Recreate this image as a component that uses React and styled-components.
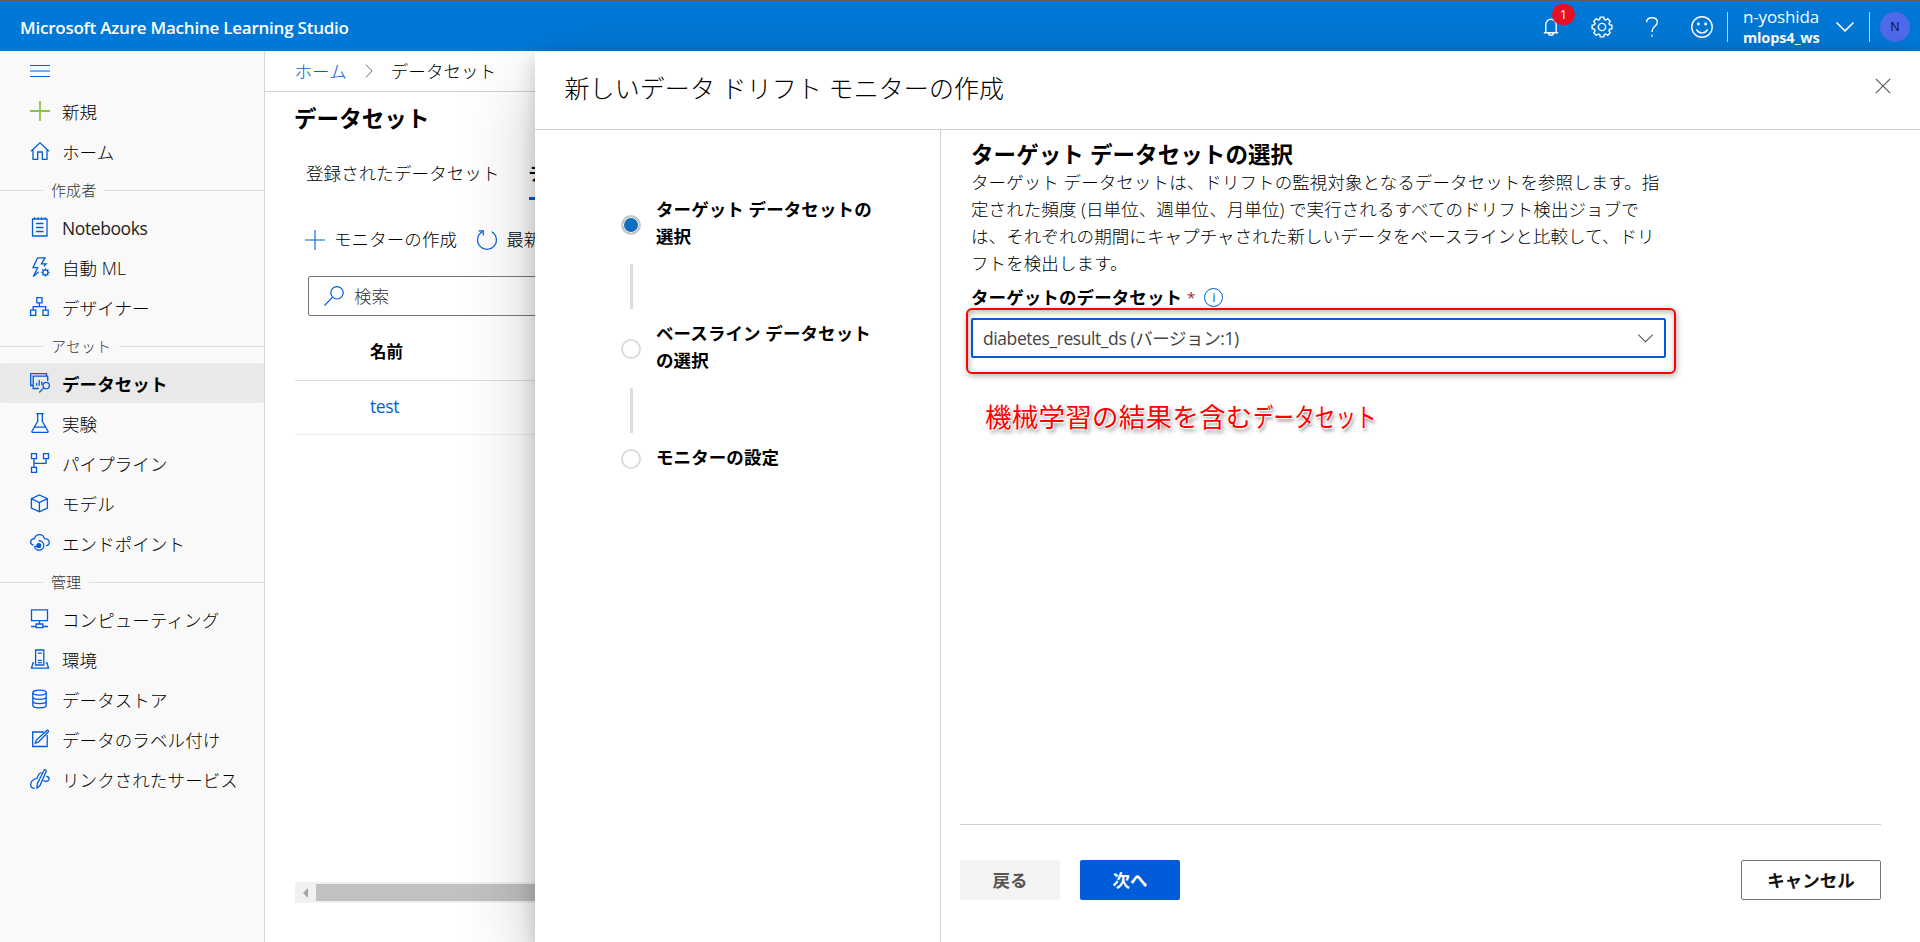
import React from 'react';
import styled, { createGlobalStyle, css } from 'styled-components';

const BLUE = '#015cda';

const NAV = [
  { icon: 'plus', label: '新規' },
  { icon: 'home', label: 'ホーム' },
  { group: '作成者' },
  { icon: 'notebook', label: 'Notebooks', latin: true },
  { icon: 'automl', label: '自動 ML' },
  { icon: 'designer', label: 'デザイナー' },
  { group: 'アセット' },
  { icon: 'dataset', label: 'データセット', active: true },
  { icon: 'flask', label: '実験' },
  { icon: 'pipeline', label: 'パイプライン' },
  { icon: 'cube', label: 'モデル' },
  { icon: 'endpoint', label: 'エンドポイント' },
  { group: '管理' },
  { icon: 'compute', label: 'コンピューティング' },
  { icon: 'environment', label: '環境' },
  { icon: 'datastore', label: 'データストア' },
  { icon: 'labeling', label: 'データのラベル付け' },
  { icon: 'linked', label: 'リンクされたサービス' },
];

const GEAR =
  'M8.4 1h3.2l.5 2.2 1.2.5 1.9-1.2 2.3 2.3-1.2 1.9.5 1.2 2.2.5v3.2l-2.2.5-.5 1.2 1.2 1.9-2.3 2.3-1.9-1.2-1.2.5-.5 2.2H8.4l-.5-2.2-1.2-.5-1.9 1.2-2.3-2.3 1.2-1.9-.5-1.2L1 11.6V8.4l2.2-.5.5-1.2-1.2-1.9 2.3-2.3 1.9 1.2 1.2-.5z';

// every drawing sits on a 20 x 20 grid
const icons = {
  menu: <path d="M0 4.5h20M0 10h20M0 15.5h20" />,
  plus: <path d="M10 0v20M0 10h20" />,
  home: <path d="M1 10.3 10 1.8l9 8.5M3 8.8V18.3h4.7V11h4.6v7.3H17V8.8" />,
  notebook: (
    <path d="M2.500 2h14.500v17H2.500zM6 6.500h7.500M6 10.500h7.500M6 14.500h7.500M4.600.2v1.800M8.200.2v1.800M11.600.2v1.800M15 .2v1.800" />
  ),
  automl: (
    <>
      <path d="M7.600.8h7.400l-3.600 6h4.800l-2.400 2.600M7.600.8 3 10.700h4.600L3.300 19.600l5.400-4.800" />
      <circle cx="15.400" cy="15.400" r="2.500" />
      <path d="M15.400 11.200v1.500M15.400 18.100v1.500M11.200 15.400h1.500M18.100 15.400h1.500M12.400 12.400l1 1M17.400 17.400l1 1M12.400 18.400l1-1M17.400 13.400l1-1" />
    </>
  ),
  designer: (
    <path d="M6.800.7h5.200v5.200H6.800zM.6 13.200h5.200v5.200H.6zM13 13.200h5.200v5.200H13zM9.400 5.900v3.800M3.200 13.200V9.700h12.400v3.500" />
  ),
  dataset: (
    <>
      <path d="M3.200 12.500H.7V.7h15.800v2.500" />
      <path d="M8.800 15.500H3.200V3.200h14.500V8M6.600 12.800V10M9.200 12.800V7M11.800 12V8.500" />
      <circle cx="16.200" cy="12.600" r="3.200" />
      <path d="m13.900 14.900-4.700 4.600" />
    </>
  ),
  flask: (
    <path d="M6.200.7h7.600M7.700.7v7.600L2 18.200q-.4 1.100.8 1.100h14.400q1.200 0 .8-1.100L12.300 8.300V.7M4.600 14.200h10.800" />
  ),
  pipeline: (
    <path d="M1.500.7h5v5h-5zM13.500.7h5v5h-5zM1.500 14.300h5v5h-5zM4 5.700v8.600M16 5.700v4.600H4" />
  ),
  cube: (
    <path d="m9.400 2 8 3.700v9.300l-8 3.800-8-3.800V5.700zM1.400 5.700l8 3.900 8-3.900M9.400 9.600v9.200" />
  ),
  endpoint: (
    <>
      <path d="M3.600 12.200C1.600 11.800.7 10.500.7 9c0-2.200 1.900-3.500 3.700-3.200C5 3.200 7 1.600 9.400 1.600c2.600 0 4.500 1.500 5 4 2.600-.1 4.800 1.300 4.800 3.800 0 1.900-1.400 3.100-3.300 3.200" />
      <path d="M4.500 13.400a4.700 4.700 0 1 0 4-5.600M4.500 13.400h4" />
      <circle cx="8.800" cy="12.500" r="1.900" fill="currentColor" />
    </>
  ),
  compute: (
    <path d="M1.500.8h16v10.800h-16zM9.500 11.600v3.200M1 17.500h5M13 17.500h5M6.200 15h6.600v3.600H6.200z" />
  ),
  environment: (
    <path d="M5.600 16V1h8.200v15zM7.800 4.200h4M7.800 11.300h4M7.800 13.600h4M4 14H3L1.500 19.200h17L17 14h-1.300" />
  ),
  datastore: (
    <>
      <ellipse cx="9.500" cy="3.600" rx="6.700" ry="2.500" />
      <path d="M2.800 3.600v12.600c0 1.500 3 2.600 6.700 2.600s6.700-1.100 6.700-2.600V3.600M2.800 7.800c0 1.500 3 2.600 6.700 2.600s6.700-1.100 6.700-2.600M2.800 12c0 1.500 3 2.600 6.700 2.600s6.700-1.100 6.700-2.600" />
    </>
  ),
  labeling: (
    <path d="M13.500 3H2.700v14.500h14.500V6M17.200 1.200c1.200 0 1.700 1 1 1.800L8.500 13 5.300 14.200l1-3.200z" />
  ),
  linked: (
    <>
      <path d="M14.300.8c1.300-.4 2.300.6 1.800 1.800L10 16.500l-3 2.600.2-4.200z" />
      <path d="M11.500 4c-1.500-.4-2.500.8-3 2L6.600 10M6.200 9.600C3 9.800.7 12.800.7 15.400c0 2.300 1.600 3.900 4 3.900M13.400 11.500c2.300 1.800 5.800.6 5.800-1.500 0-1.500-1.200-2.400-2.800-2.500" />
    </>
  ),
  bell: (
    <path d="M2.800 16.800h14.400M4.800 16.800V8.500a5.200 5.200 0 0 1 10.400 0v8.300M7.500 17c0 3 5 3 5 0" />
  ),
  gear: (
    <>
      <path d={GEAR} />
      <circle cx="10" cy="10" r="3.300" />
    </>
  ),
  help: (
    <>
      <path d="M4.600 5.200C4.800 2.400 7 .8 10 .8c3.200 0 5.300 1.700 5.300 4.300 0 4.300-5.200 4.600-5.200 8.600v1.200" />
      <path d="M10.100 17.800v1.900" />
    </>
  ),
  smile: (
    <>
      <circle cx="10" cy="10" r="9.300" />
      <path d="M5 12.200c2 4.200 8 4.200 10 0" />
      <circle cx="6.700" cy="7.200" r=".7" fill="currentColor" />
      <circle cx="13.300" cy="7.200" r=".7" fill="currentColor" />
    </>
  ),
  down: <path d="m1.500 5.500 8.500 8.300 8.500-8.300" />,
  right: <path d="m6 2 8 8-8 8" />,
  close: <path d="m1 1 18 18M19 1 1 19" />,
  refresh: <path d="M5.300 1.800a9.400 9.400 0 1 0 9.400 0M1.500.8h4.800v4.600" />,
  search: (
    <>
      <circle cx="13" cy="6.800" r="6.200" />
      <path d="M8.600 11.200.5 19.500" />
    </>
  ),
};

const Icon = ({ name, size = 20, stroke = 1.2, color }) => (
  <Svg viewBox="0 0 20 20" width={size} height={size} strokeWidth={stroke} $color={color}>
    {icons[name]}
  </Svg>
);

const Header = () => (
  <TopBar>
    <Brand>Microsoft Azure Machine Learning Studio</Brand>
    <Tools>
      <Tool>
        <Icon name="bell" stroke={1.4} />
        <Badge>1</Badge>
      </Tool>
      <Tool>
        <Icon name="gear" size={22} stroke={1.3} />
      </Tool>
      <Tool>
        <Icon name="help" stroke={1.4} />
      </Tool>
      <Tool>
        <Icon name="smile" size={22} stroke={1.3} />
      </Tool>
    </Tools>
    <Account>
      <Identity>
        <UserName>n-yoshida</UserName>
        <Workspace>mlops4_ws</Workspace>
      </Identity>
      <Icon name="down" stroke={1.7} />
    </Account>
    <Avatar>N</Avatar>
  </TopBar>
);

const Sidebar = () => (
  <Side>
    <NavItem>
      <Icon name="menu" stroke={1.1} />
    </NavItem>
    {NAV.map(item =>
      item.group ? (
        <NavGroup key={item.group}>
          <span>{item.group}</span>
        </NavGroup>
      ) : (
        <NavItem key={item.label} $active={item.active}>
          <Icon
            name={item.icon}
            stroke={item.icon === 'plus' ? 1.8 : 1.3}
            color={item.icon === 'plus' ? '#8cc63f' : undefined}
          />
          <NavLabel $latin={item.latin}>{item.label}</NavLabel>
        </NavItem>
      )
    )}
  </Side>
);

const Datasets = () => (
  <Main>
    <Breadcrumb>
      <a>ホーム</a>
      <Icon name="right" size={16} color="#666" />
      <span>データセット</span>
    </Breadcrumb>
    <PageTitle>データセット</PageTitle>
    <Tabs>
      <Tab>登録されたデータセット</Tab>
      <Tab $active>データセット モニター</Tab>
    </Tabs>
    <Toolbar>
      <Command>
        <Icon name="plus" stroke={1.1} />
        モニターの作成
      </Command>
      <Command>
        <Icon name="refresh" />
        最新の情報に更新
      </Command>
    </Toolbar>
    <SearchBox>
      <Icon name="search" />
      検索
    </SearchBox>
    <TableHead>名前</TableHead>
    <TableRow>test</TableRow>
    <ScrollTrack>
      <ScrollArrow />
      <ScrollThumb />
    </ScrollTrack>
  </Main>
);

const Wizard = () => (
  <Drawer>
    <DrawerHead>
      <DrawerTitle>新しいデータ ドリフト モニターの作成</DrawerTitle>
      <Icon name="close" size={16} stroke={1.4} color="#555" />
    </DrawerHead>
    <DrawerBody>
      <Steps>
        <Step>
          <Dot $active />
          <StepText>
            ターゲット データセットの
            <br />
            選択
          </StepText>
        </Step>
        <StepLine />
        <Step>
          <Dot />
          <StepText>
            ベースライン データセット
            <br />
            の選択
          </StepText>
        </Step>
        <StepLine />
        <Step>
          <Dot />
          <StepText>モニターの設定</StepText>
        </Step>
      </Steps>
      <Content>
        <Form>
          <FormTitle>ターゲット データセットの選択</FormTitle>
          <Description>
            ターゲット データセットは、ドリフトの監視対象となるデータセットを参照します。指
            <br />
            定された頻度 (日単位、週単位、月単位) で実行されるすべてのドリフト検出ジョブで
            <br />
            は、それぞれの期間にキャプチャされた新しいデータをベースラインと比較して、ドリ
            <br />
            フトを検出します。
          </Description>
          <Label>
            ターゲットのデータセット
            <Required>*</Required>
            <Info>i</Info>
          </Label>
          <Select>
            <span>diabetes_result_ds (バージョン:1)</span>
            <Icon name="down" size={17} color="#555" />
            <Highlight />
          </Select>
          <Note>
            機械学習の結果を含む<Narrow>データセット</Narrow>
          </Note>
        </Form>
        <Footer>
          <Button $kind="disabled">戻る</Button>
          <Button $kind="primary">次へ</Button>
          <Button $kind="outline">キャンセル</Button>
        </Footer>
      </Content>
    </DrawerBody>
  </Drawer>
);

export default function App() {
  return (
    <Page>
      <GlobalStyle />
      <Header />
      <Workarea>
        <Sidebar />
        <Datasets />
      </Workarea>
      <Wizard />
    </Page>
  );
}

const GlobalStyle = createGlobalStyle`
  * {
    box-sizing: border-box;
  }

  body {
    margin: 0;
    font-family: 'Open Sans', 'Noto Sans CJK JP', sans-serif;
    font-size: 17.5px;
    font-weight: 300;
    line-height: 27px;
    letter-spacing: 0.09px;
    color: #000;
    background: #fff;
  }
`;

const Svg = styled.svg`
  flex: none;
  fill: none;
  stroke: currentColor;
  color: ${props => props.$color || 'inherit'};
  overflow: visible;
`;

const Page = styled.div`
  position: relative;
  width: 1920px;
  height: 942px;
  display: flex;
  flex-direction: column;
  overflow: hidden;
  white-space: nowrap;
`;

const TopBar = styled.header`
  height: 51px;
  flex: none;
  display: flex;
  align-items: center;
  padding: 1px 10px 0 20px;
  font-weight: 400;
  color: #fff;
  background: #0078d7;
  border-top: 1px solid #5a5f66;
`;

const Brand = styled.div`
  flex: 1;
  padding-top: 2px;
  font-size: 17px;
  font-weight: 600;
  letter-spacing: -0.23px;
`;

const Tools = styled.div`
  display: flex;
`;

const Tool = styled.div`
  position: relative;
  width: 50px;
  height: 50px;
  display: flex;
  align-items: center;
  justify-content: center;

  &:first-child {
    padding: 0 2px 2px 0;
  }
`;

const Badge = styled.span`
  position: absolute;
  top: 2px;
  left: 25px;
  width: 23px;
  height: 21px;
  border-radius: 11px;
  font-size: 13px;
  line-height: 21px;
  text-align: center;
  background: #e81123;
`;

const Account = styled.div`
  height: 30px;
  width: 143px;
  display: flex;
  align-items: center;
  justify-content: space-between;
  padding: 0 14px 0 15px;
  border-left: 1px solid #b9d9f3;
  border-right: 1px solid #b9d9f3;
`;

const Identity = styled.div`
  line-height: 21px;
`;

const UserName = styled.div`
  font-size: 17px;
  letter-spacing: -0.15px;
`;

const Workspace = styled.div`
  font-size: 14.5px;
  font-weight: 700;
  letter-spacing: -0.15px;
`;

const Avatar = styled.div`
  width: 30px;
  height: 30px;
  margin-left: 10px;
  border-radius: 50%;
  font-size: 12.5px;
  line-height: 30px;
  text-align: center;
  color: #111;
  background: #4f6bed;
`;

const Workarea = styled.div`
  flex: 1;
  display: flex;
  min-height: 0;
`;

const Side = styled.nav`
  width: 265px;
  flex: none;
  background: #f9f9f9;
  border-right: 1px solid #d6d6d6;
`;

const NavItem = styled.div`
  height: 40px;
  display: flex;
  align-items: center;
  gap: 12px;
  padding-left: 30px;
  color: ${BLUE};
  border-radius: 2px;

  ${props =>
    props.$active &&
    css`
      font-weight: 700;
      background: #e9e9e9;
    `}
`;

const NavLabel = styled.span`
  padding-top: 2px;
  color: #000;

  ${props =>
    props.$latin &&
    css`
      font-weight: 400;
      letter-spacing: -0.4px;
      color: #222;
    `}
`;

const NavGroup = styled.div`
  height: 36px;
  display: flex;
  align-items: center;
  gap: 8px;
  padding-top: 3px;
  font-size: 15px;
  line-height: 20px;
  color: #333;

  &::before,
  &::after {
    content: '';
    height: 1px;
    background: #dcdcdc;
  }

  &::before {
    width: 43px;
  }

  &::after {
    flex: 1;
  }

  span {
    margin-top: -2px;
  }
`;

const Main = styled.main`
  flex: 1;
  min-width: 0;
  display: flex;
  flex-direction: column;
`;

const Breadcrumb = styled.div`
  height: 41px;
  display: flex;
  align-items: center;
  gap: 14px;
  padding: 0 0 0 29.5px;
  border-bottom: 1px solid #d0d0d0;

  a {
    color: ${BLUE};
  }
`;

const PageTitle = styled.h1`
  margin: 11px 0 0 29px;
  font-size: 22.5px;
  line-height: 32px;
  font-weight: 700;
`;

const Tabs = styled.div`
  display: flex;
  gap: 29px;
  margin: 13px 0 0 41px;
`;

const Tab = styled.div`
  height: 52px;
  padding-top: 12px;

  ${props =>
    props.$active &&
    css`
      font-weight: 700;
      border-bottom: 3px solid ${BLUE};
    `}
`;

const Toolbar = styled.div`
  height: 55px;
  display: flex;
  align-items: center;
  gap: 20px;
  margin: 12px 0 0 40px;
`;

const Command = styled.div`
  display: flex;
  align-items: center;
  gap: 9px;

  svg {
    color: ${BLUE};
  }
`;

const SearchBox = styled.div`
  height: 40px;
  display: flex;
  align-items: center;
  gap: 10px;
  margin: 9px 0 0 43px;
  padding-left: 15px;
  color: #333;
  border: 1px solid #777;
  border-radius: 2px;

  svg {
    color: ${BLUE};
  }
`;

const TableHead = styled.div`
  height: 65px;
  margin-left: 30px;
  padding: 22px 0 0 75px;
  font-size: 16.5px;
  font-weight: 700;
  border-bottom: 1px solid #dedede;
`;

const TableRow = styled.div`
  height: 54px;
  margin-left: 30px;
  padding: 12px 0 0 75px;
  font-weight: 400;
  letter-spacing: -0.4px;
  color: ${BLUE};
  border-bottom: 1px solid #ededed;
`;

const ScrollTrack = styled.div`
  height: 21px;
  display: flex;
  align-items: center;
  gap: 8px;
  margin: auto 0 39px 30px;
  padding-left: 8px;
  background: #f1f1f1;
`;

const ScrollArrow = styled.div`
  border: 5px solid transparent;
  border-left-width: 0;
  border-right-color: #a3a3a3;
`;

const ScrollThumb = styled.div`
  flex: 1;
  height: 17px;
  background: #c1c1c1;
`;

const Drawer = styled.aside`
  position: absolute;
  top: 51px;
  right: 0;
  bottom: 0;
  width: 1385px;
  display: flex;
  flex-direction: column;
  background: #fff;
  box-shadow: 0 32px 72px rgba(0, 0, 0, 0.22), 0 6px 18px rgba(0, 0, 0, 0.18);
`;

const DrawerHead = styled.div`
  height: 79px;
  flex: none;
  display: flex;
  justify-content: space-between;
  padding: 19px 29px 0 29.5px;
  border-bottom: 1px solid #d0d0d0;

  svg {
    margin-top: 8px;
  }
`;

const DrawerTitle = styled.h2`
  margin: 0;
  font-size: 25px;
  line-height: 36px;
  font-weight: 300;
`;

const DrawerBody = styled.div`
  flex: 1;
  display: flex;
`;

const Steps = styled.div`
  width: 406px;
  padding: 66px 0 0 86px;
  border-right: 1px solid #d0d0d0;
`;

const Step = styled.div`
  display: flex;
  align-items: center;
  gap: 15px;
`;

const Dot = styled.div`
  width: 20px;
  height: 20px;
  margin-top: 3px;
  border-radius: 50%;
  border: 2px solid ${props => (props.$active ? '#c8c8c8' : '#dcdcdc')};
  background: ${props => (props.$active ? '#106ebe' : '#fff')};
  box-shadow: inset 0 0 0 1px #fff;
`;

const StepText = styled.div`
  font-weight: 700;
`;

const StepLine = styled.div`
  width: 3px;
  height: 45px;
  margin: 14px 0 11px 9px;
  background: #dcdcdc;
`;

const Content = styled.section`
  flex: 1;
  display: flex;
  flex-direction: column;
  justify-content: space-between;
  padding: 0 39px 42px 19px;
`;

const Form = styled.div`
  width: 706px;
  padding: 9px 0 0 11px;
`;

const FormTitle = styled.h3`
  margin: 0;
  font-size: 22.5px;
  line-height: 32px;
  font-weight: 700;
`;

const Description = styled.p`
  margin: -2px 0 0;
`;

const Label = styled.div`
  display: flex;
  align-items: center;
  margin: 7px 0 7px;
  font-weight: 700;
`;

const Required = styled.span`
  margin-left: 5px;
  font-size: 15px;
  font-weight: 400;
  color: #a4262c;
`;

const Info = styled.span`
  width: 19px;
  height: 19px;
  margin-left: 9px;
  border: 1px solid ${BLUE};
  border-radius: 50%;
  font-size: 13px;
  line-height: 17px;
  font-weight: 400;
  text-align: center;
  color: ${BLUE};
`;

const Select = styled.div`
  position: relative;
  height: 40px;
  display: flex;
  align-items: center;
  justify-content: space-between;
  padding: 0 10px;
  font-weight: 400;
  letter-spacing: -0.42px;
  color: #444;
  border: 2px solid ${BLUE};
  border-radius: 2px;
`;

// red marker frame drawn round the select
const Highlight = styled.div`
  position: absolute;
  top: -12px;
  right: -12px;
  bottom: -18px;
  left: -7px;
  border: 2px solid #f00;
  border-radius: 6px;
  box-shadow: 1px 2px 6px rgba(0, 0, 0, 0.3), inset 1px 2px 6px rgba(0, 0, 0, 0.3);
`;

const Note = styled.div`
  margin: 40px 0 0 14px;
  font-size: 26.5px;
  line-height: 38px;
  font-weight: 400;
  letter-spacing: 0.25px;
  color: #f00;
  text-shadow: 0 0 2px #fff, 1px 1px 1px #fff, -1px -1px 1px #fff, 2px 3px 4px rgba(0, 0, 0, 0.5);
`;

const Narrow = styled.span`
  display: inline-block;
  transform: scaleX(0.77);
  transform-origin: left;
`;

const Footer = styled.div`
  display: flex;
  gap: 20px;
  padding-top: 35px;
  border-top: 1px solid #d0d0d0;
`;

const Button = styled.button`
  width: 100px;
  height: 40px;
  padding: 0;
  border: none;
  border-radius: 2px;
  font: inherit;
  font-weight: 700;

  ${props =>
    props.$kind === 'disabled' &&
    css`
      color: #555;
      background: #f3f3f3;
    `}

  ${props =>
    props.$kind === 'primary' &&
    css`
      color: #fff;
      background: ${BLUE};
    `}

  ${props =>
    props.$kind === 'outline' &&
    css`
      width: 140px;
      margin-left: auto;
      color: #111;
      background: #fff;
      border: 1px solid #777;
    `}
`;
